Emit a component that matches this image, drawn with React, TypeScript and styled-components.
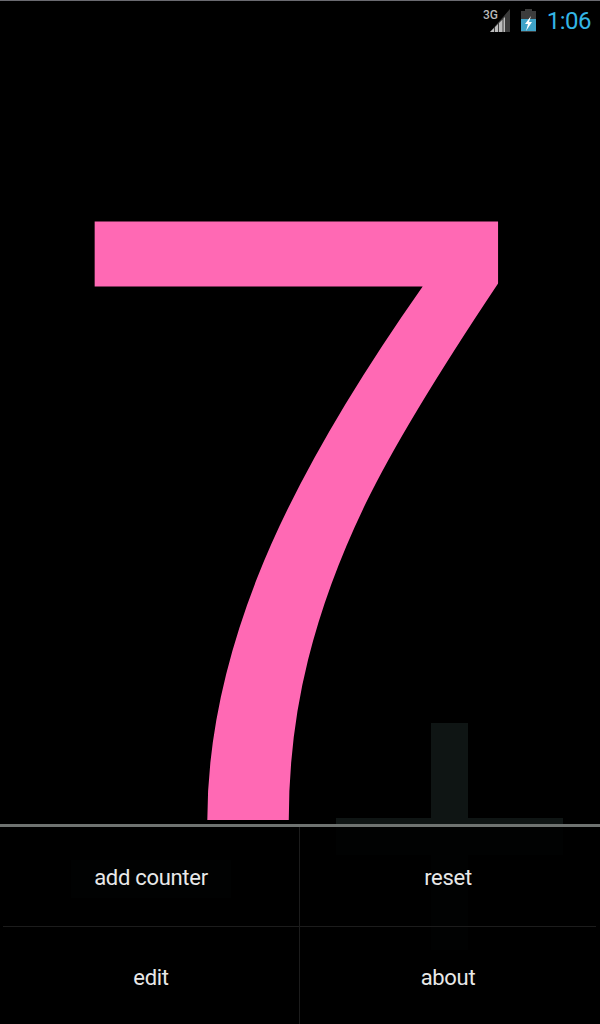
import React from 'react'
import styled, { createGlobalStyle } from 'styled-components'

const menuItems = ['add counter', 'reset', 'edit', 'about']

export default function App(): JSX.Element {
  return (
    <Screen>
      <GlobalStyle />
      <StatusBar>
        <NetworkIcon viewBox="0 0 28 24" aria-hidden="true">
          <path d="M27 0v23H7z" fill="#3c3c3c" />
          <path d="M7 23l4-4v4zM12 23v-5l3-3v8zM16 23v-9l3.5-3.5v12.5zM20.5 23V9.500l1.500-1.500v15z" fill="#bdbdbd" />
          <text x="0" y="10" fontSize="12" fontWeight="500" fill="#b8b8b8" fontFamily="Roboto, sans-serif">3G</text>
        </NetworkIcon>
        <BatteryIcon viewBox="0 0 17 23" aria-hidden="true">
          <path d="M5 0h7v2h4v21H1V2h4z" fill="#3c3c3c" />
          <path d="M1 10h15v12H1z" fill="#3fa3c8" />
          <path d="M11 7 5 15h3l-2 7 6-9H9z" fill="#fff" />
        </BatteryIcon>
        <Clock>1:06</Clock>
      </StatusBar>
      <CounterView>
        <CountText>7</CountText>
        <PlusButton />
        <MinusButton />
      </CounterView>
      <OptionsMenu>
        {menuItems.map((item, index) => (
          <MenuItem key={item} $right={index % 2 === 1} $bottom={index > 1}>
            {item}
          </MenuItem>
        ))}
      </OptionsMenu>
    </Screen>
  )
}

const GlobalStyle = createGlobalStyle`
  html, body {
    margin: 0;
    padding: 0;
    background: #000;
  }
`

const Screen = styled.div`
  position: relative;
  display: flex;
  flex-direction: column;
  width: 600px;
  height: 1024px;
  overflow: hidden;
  background: #000;
  font-family: Roboto, sans-serif;
`

const StatusBar = styled.div`
  display: flex;
  align-items: center;
  justify-content: flex-end;
  flex-shrink: 0;
  height: 38px;
  padding: 2px 9px 0 0;
  box-sizing: border-box;
  border-top: 1px solid #6a6a70;
`

const NetworkIcon = styled.svg`
  width: 28px;
  height: 24px;
  margin-right: 9px;
`

const BatteryIcon = styled.svg`
  width: 17px;
  height: 23px;
  margin-right: 10px;
`

const Clock = styled.span`
  color: #33b5e5;
  font-size: 24px;
  letter-spacing: -0.5px;
  line-height: 34px;
`

const CounterView = styled.div`
  position: relative;
  flex: 1;
  display: flex;
  justify-content: center;
`

const CountText = styled.div`
  color: #ff69b4;
  font-family: 'Liberation Sans', Arial, sans-serif;
  font-size: 870px;
  line-height: 961px;
  height: 782px;
  overflow: hidden;
  transform: translateX(-4px) scaleX(1.02);
`

const PlusButton = styled.div`
  position: absolute;
  left: 336px;
  top: 685px;
  width: 227px;
  height: 227px;
  background:
    linear-gradient(#0f1514, #0f1514) center / 37px 100% no-repeat,
    linear-gradient(#0f1514, #0f1514) center / 100% 37px no-repeat;
`

const MinusButton = styled.div`
  position: absolute;
  left: 71px;
  top: 822px;
  width: 160px;
  height: 38px;
  background: #0f1514;
`

const OptionsMenu = styled.div`
  position: absolute;
  left: 0;
  right: 0;
  bottom: 0;
  display: grid;
  grid-template-columns: 296px 297px;
  grid-template-rows: 99px 98px;
  height: 200px;
  padding: 0 4px 0 3px;
  box-sizing: border-box;
  border-top: 3px solid #6f7371;
  background: rgba(0, 0, 0, 0.9);
`

const MenuItem = styled.div<{ $right: boolean; $bottom: boolean }>`
  display: flex;
  align-items: center;
  justify-content: center;
  box-sizing: border-box;
  padding-top: ${(props) => (props.$bottom ? '4px' : '2px')};
  color: #e8e8e8;
  font-size: 22px;
  letter-spacing: -0.3px;
  border-left: ${(props) => (props.$right ? '1px solid #1c1c1c' : 'none')};
  border-top: ${(props) => (props.$bottom ? '1px solid #1c1c1c' : 'none')};
`
